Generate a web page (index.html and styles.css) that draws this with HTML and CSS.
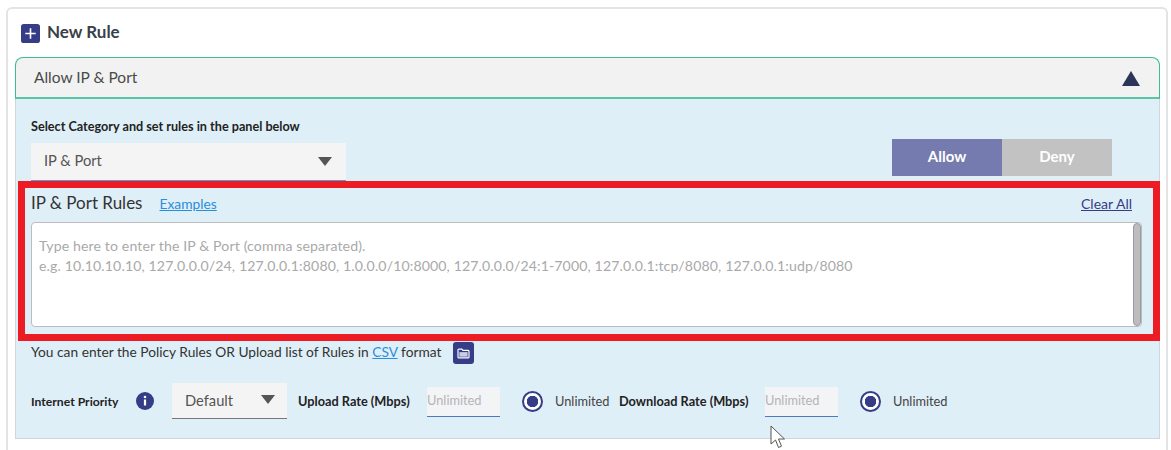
FILE: index.html
```html
<!DOCTYPE html>
<html lang="en">
<head>
<meta charset="utf-8">
<title>New Rule</title>
<link rel="stylesheet" href="styles.css">
</head>
<body>
<main class="card">
  <div class="title-row">
    <svg class="plus-icon" viewBox="0 0 20 20" width="19" height="19"><rect width="20" height="20" rx="3" fill="#343d85"/><path d="M10 4.5v11M4.5 10h11" stroke="#fff" stroke-width="1.7"/></svg>
    <h1 class="title">New Rule</h1>
  </div>
  <section class="panel">
    <header class="panel-head">
      <span class="panel-name">Allow IP &amp; Port</span>
      <span class="tri-up"></span>
    </header>
    <div class="panel-body">
      <div class="category-row">
        <div class="category-col">
          <div class="category-label">Select Category and set rules in the panel below</div>
          <div class="select select-wide"><span>IP &amp; Port</span><span class="tri-down"></span></div>
        </div>
        <div class="toggle">
          <div class="toggle-btn allow">Allow</div>
          <div class="toggle-btn deny">Deny</div>
        </div>
      </div>
      <div class="highlight">
        <div class="rules-head">
          <span class="rules-title">IP &amp; Port Rules</span>
          <a class="link examples">Examples</a>
          <a class="clear">Clear All</a>
        </div>
        <div class="textarea">
          <div class="placeholder">
            <div>Type here to enter the IP &amp; Port (comma separated).</div>
            <div>e.g. 10.10.10.10, 127.0.0.0/24, 127.0.0.1:8080, 1.0.0.0/10:8000, 127.0.0.0/24:1-7000, 127.0.0.1:tcp/8080, 127.0.0.1:udp/8080</div>
          </div>
          <div class="scrollbar"></div>
        </div>
      </div>
      <div class="upload-row">
        <span class="upload-text">You can enter the Policy Rules OR Upload list of Rules in <a class="link">CSV</a> format</span>
        <span class="folder-btn">
          <svg viewBox="0 0 14 12" width="13" height="11"><path d="M1 2.2c0-.6.4-1 1-1h3.2l1.2 1.3H12c.6 0 1 .4 1 1v6.300c0 .6-.4 1-1 1H2c-.6 0-1-.4-1-1z" fill="none" stroke="#fff" stroke-width="1.300"/><rect x="2.500" y="4.500" width="9" height="5" fill="#c9cde6"/></svg>
        </span>
      </div>
      <div class="rate-row">
        <span class="rate-label priority">Internet Priority</span>
        <svg class="info" viewBox="0 0 18 18" width="18" height="18"><circle cx="9" cy="9" r="9" fill="#343d85"/><circle cx="9" cy="5" r="1.300" fill="#fff"/><rect x="7.900" y="7.500" width="2.200" height="6" fill="#fff"/></svg>
        <div class="select select-small"><span>Default</span><span class="tri-down"></span></div>
        <span class="rate-label upload">Upload Rate (Mbps)</span>
        <div class="rate-input">Unlimited</div>
        <span class="radio"></span>
        <span class="radio-text">Unlimited</span>
        <span class="rate-label download">Download Rate (Mbps)</span>
        <div class="rate-input">Unlimited</div>
        <span class="radio"></span>
        <span class="radio-text">Unlimited</span>
      </div>
    </div>
  </section>
</main>
<svg class="cursor" viewBox="0 0 17 25" width="17" height="25"><path d="M1 1v18l4.500-4 3 7.500 3-1.300-3-7.200h6z" fill="#fff" stroke="#555" stroke-width="1"/></svg>
</body>
</html>
```

FILE: styles.css
```css
* { box-sizing: border-box; }
html, body { margin: 0; height: 450px; overflow: hidden; background: #fff; }
body {
  position: relative;
  font-family: Lato, "Open Sans", sans-serif;
  color: #333;
}
.card {
  margin: 7px 3px 0 6px;
  height: 460px;
  border: 2px solid #e4e4e4;
  border-radius: 6px;
  padding: 14px 6px 0 7px;
}
.title-row { display: flex; align-items: center; height: 21px; margin-left: 6px; gap: 7px; }
.plus-icon { display: block; }
.title { margin: 0 0 3px; font-size: 17px; font-weight: 700; color: #3a3f4a; line-height: 18px; }
.panel { margin-top: 13px; }
.panel-head {
  display: flex; justify-content: space-between; align-items: center;
  height: 42px; padding: 0 19px 0 18px;
  background: #f2f2f2;
  border: 1px solid #3fbb90;
  border-bottom: 2px solid #5cc4a0;
  border-radius: 8px 8px 0 0;
  font-size: 15.500px; color: #4a4a4a;
}
.panel-name { margin-bottom: 2px; }
.tri-up { width: 0; height: 0; border-left: 9px solid transparent; border-right: 9px solid transparent; border-bottom: 15px solid #2b3558; margin-top: 2px; }
.tri-down { width: 0; height: 0; border-left: 7.500px solid transparent; border-right: 7.500px solid transparent; border-bottom: 0; border-top: 9px solid #555; }
.panel-body {
  height: 340px;
  background: #dfeff8;
  border: 1px solid #cfd6dc;
  border-top: 0;
}
.category-row { display: flex; justify-content: space-between; height: 82px; padding: 0 47px 0 15px; }
.category-label { font-size: 12.650px; font-weight: 700; color: #222; margin-top: 20px; line-height: 15px; white-space: nowrap; }
.select {
  display: flex; align-items: center; justify-content: space-between;
  background: #f4f4f4;
  color: #555;
}
.select-wide { width: 315px; height: 38px; margin-top: 9px; padding: 0 14px 4px 13px; font-size: 14.700px; border-bottom: 1px solid #4b9fd5; }
.select-wide .tri-down { margin-top: 4px; }
.toggle { display: flex; margin-top: 40px; height: 37px; }
.toggle-btn { width: 110px; display: flex; align-items: center; justify-content: center; padding-bottom: 3px; color: #fff; font-size: 15px; font-weight: 700; }
.allow { background: #757bae; }
.deny { background: #c2c2c2; }
.highlight {
  margin: 0 -1px 0 2px;
  height: 160px;
  border: 7px solid #ed1c24;
  padding: 0 9px 0 6px;
}
.rules-head { display: flex; align-items: baseline; height: 34px; padding: 4px 12px 0 0; }
.rules-title { font-size: 17px; color: #333; line-height: 22px; }
.link { color: #2a8ddc; text-decoration: underline; }
.examples { font-size: 13.800px; margin-left: 17px; }
.clear { margin-left: auto; font-size: 14px; color: #343d85; text-decoration: underline; }
.textarea {
  position: relative;
  height: 105px;
  margin-right: 2px;
  background: #fff;
  border: 1px solid #bcbcbc;
  border-radius: 4px;
  padding: 13px 7px;
}
.placeholder { font-size: 14.100px; line-height: 20px; color: #a9a9a9; letter-spacing: 0.130px; white-space: nowrap; }
.scrollbar { position: absolute; top: 0; bottom: 0; right: 0; width: 8px; border-radius: 4px; background: #bdbdbd; border: 1px solid #9a9aa8; }
.upload-row { display: flex; align-items: center; height: 24px; padding-left: 15px; font-size: 13.750px; color: #333; gap: 11px; }
.upload-text { margin-bottom: 3px; }
.folder-btn { display: flex; align-items: center; justify-content: center; width: 21px; height: 22px; background: #343d85; border-radius: 3px; }
.rate-row { display: flex; align-items: center; height: 48px; margin-top: 12px; padding-left: 15px; }
.rate-label { font-size: 12.750px; font-weight: 700; color: #222; white-space: nowrap; }
.priority { width: 105px; font-size: 12.200px; }
.info { margin-right: 18px; }
.select-small { width: 115px; height: 36px; padding: 0 12px 2px 13px; font-size: 14.700px; border-bottom: 1px solid #777; margin-right: 11px; }
.upload { width: 129px; }
.download { width: 146px; margin-left: 10px; }
.rate-input { width: 73px; height: 30px; margin-top: 1px; background: #f2f4f6; color: #b5b5b5; padding: 5px 0 0 0; font-size: 12.800px; border-bottom: 1px solid #4f78c4; }
.radio {
  width: 21px; height: 21px; margin-left: 22px; border-radius: 50%;
  border: 2px solid #343d85;
  background: radial-gradient(circle, #343d85 0 5.500px, #fff 6px);
}
.radio-text { margin-left: 12px; font-size: 12.800px; color: #444; width: 54px; white-space: nowrap; }
.cursor { position: absolute; left: 770px; top: 425px; }
```
